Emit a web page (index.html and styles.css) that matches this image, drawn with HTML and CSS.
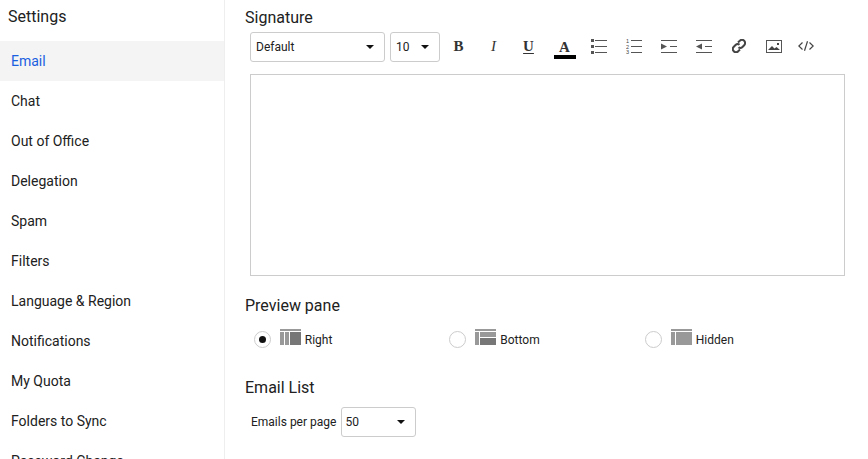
FILE: index.html
```html
<!DOCTYPE html>
<html lang="en">
<head>
<meta charset="utf-8">
<title>Settings</title>
<link rel="stylesheet" href="styles.css">
</head>
<body>
<div class="app">
  <nav class="sidebar">
    <h1 class="sidebar-title">Settings</h1>
    <ul class="nav-list">
      <li class="nav-item active">Email</li>
      <li class="nav-item">Chat</li>
      <li class="nav-item">Out of Office</li>
      <li class="nav-item">Delegation</li>
      <li class="nav-item">Spam</li>
      <li class="nav-item">Filters</li>
      <li class="nav-item">Language &amp; Region</li>
      <li class="nav-item">Notifications</li>
      <li class="nav-item">My Quota</li>
      <li class="nav-item">Folders to Sync</li>
      <li class="nav-item">Password Change</li>
    </ul>
  </nav>
  <main class="content">
    <h2 class="heading heading-signature">Signature</h2>
    <div class="toolbar">
      <div class="select select-font"><span>Default</span><i class="caret"></i></div>
      <div class="select select-size"><span>10</span><i class="caret"></i></div>
      <div class="tools">
        <span class="tool glyph bold">B</span>
        <span class="tool glyph italic">I</span>
        <span class="tool glyph underline">U</span>
        <span class="tool color"><span class="glyph bold">A</span><i class="color-bar"></i></span>
        <span class="tool"><svg width="16" height="16" viewBox="0 0 16 16"><g fill="#555"><rect x="0" y="1" width="3" height="3"/><rect x="0" y="7" width="3" height="3"/><rect x="0" y="13" width="3" height="3"/><rect x="4" y="2" width="12" height="1"/><rect x="4" y="8" width="12" height="1"/><rect x="4" y="14" width="12" height="1"/></g></svg></span>
        <span class="tool"><svg width="16" height="16" viewBox="0 0 16 16"><g fill="#555"><rect x="5" y="2" width="11" height="1"/><rect x="5" y="8" width="11" height="1"/><rect x="5" y="14" width="11" height="1"/></g><g class="digits"><text x="0" y="4.500">1</text><text x="0" y="10.500">2</text><text x="0" y="16">3</text></g></svg></span>
        <span class="tool"><svg width="16" height="14" viewBox="0 0 16 14"><g fill="#555"><rect x="0" y="1" width="16" height="1"/><rect x="0" y="13" width="16" height="1"/><rect x="9" y="7" width="7" height="1"/><path d="M0 4.500L6 7.500L0 10.500Z"/></g></svg></span>
        <span class="tool"><svg width="16" height="14" viewBox="0 0 16 14"><g fill="#555"><rect x="0" y="1" width="16" height="1"/><rect x="0" y="13" width="16" height="1"/><rect x="9" y="7" width="7" height="1"/><path d="M6 4.500L0 7.500L6 10.500Z"/></g></svg></span>
        <span class="tool"><svg width="14" height="14" viewBox="0 0 14 14" fill="none" stroke="#444" stroke-width="2"><path d="M6 3.500L7.800 1.800A2.600 2.600 0 0 1 12.200 6.200L10.200 8.200A2.600 2.600 0 0 1 6.500 8.200"/><path d="M8 10.500L6.200 12.200A2.600 2.600 0 0 1 1.800 7.800L3.800 5.800A2.600 2.600 0 0 1 7.500 5.800"/></svg></span>
        <span class="tool"><svg width="16" height="13" viewBox="0 0 16 13"><rect x="0.500" y="0.500" width="15" height="12" fill="#fff" stroke="#555"/><path d="M2 10L6 6L8.500 8.500L10.500 7L14 10Z" fill="#444"/><rect x="11" y="3" width="2" height="2" fill="#444"/></svg></span>
        <span class="tool tool-code"><svg width="16" height="10" viewBox="0 0 16 10" fill="none" stroke="#444" stroke-width="1.200"><path d="M4.500 1.500L0.800 5L4.500 8.500"/><path d="M11.500 1.500L15.200 5L11.500 8.500"/><path d="M9.500 0.300L6.500 9.700"/></svg></span>
      </div>
    </div>
    <div class="editor"></div>
    <h2 class="heading heading-preview">Preview pane</h2>
    <div class="radio-row">
      <label class="radio-option">
        <i class="radio checked"></i>
        <svg class="pane-icon" width="21" height="16" viewBox="0 0 21 16"><rect width="21" height="2" fill="#999"/><rect y="3" width="4" height="13" fill="#999"/><rect x="5" y="3" width="4" height="13" fill="#999"/><rect x="10" y="3" width="11" height="13" fill="#777"/></svg>
        <span>Right</span>
      </label>
      <label class="radio-option">
        <i class="radio"></i>
        <svg class="pane-icon" width="21" height="16" viewBox="0 0 21 16"><rect width="21" height="2" fill="#999"/><rect y="3" width="4" height="13" fill="#999"/><rect x="5" y="3" width="16" height="5" fill="#999"/><rect x="5" y="9" width="16" height="7" fill="#777"/></svg>
        <span>Bottom</span>
      </label>
      <label class="radio-option">
        <i class="radio"></i>
        <svg class="pane-icon" width="21" height="16" viewBox="0 0 21 16"><rect width="21" height="2" fill="#999"/><rect y="3" width="4" height="13" fill="#999"/><rect x="5" y="3" width="16" height="13" fill="#999"/></svg>
        <span>Hidden</span>
      </label>
    </div>
    <h2 class="heading heading-list">Email List</h2>
    <div class="per-page">
      <span>Emails per page</span>
      <div class="select select-page"><span>50</span><i class="caret"></i></div>
    </div>
  </main>
</div>
</body>
</html>
```
FILE: styles.css
```css
* { box-sizing: border-box; }
html, body { margin: 0; height: 100%; overflow: hidden; background: #fff; }
body { font-family: Roboto, "Liberation Sans", sans-serif; color: #212121; font-size: 14px; }
.app { display: flex; height: 459px; overflow: hidden; }
.sidebar { width: 225px; flex: none; border-right: 1px solid #eee; overflow: hidden; }
.sidebar-title { margin: 0; padding: 7px 0 0 8px; height: 41px; font-size: 16px; font-weight: 400; line-height: 19px; }
.nav-list { list-style: none; margin: 0; padding: 0; }
.nav-item { height: 40px; line-height: 40px; padding-left: 11px; font-size: 14px; white-space: nowrap; }
.nav-item.active { background: #f4f4f4; color: #1a5fe0; }
.content { flex: 1; padding: 8px 23px 0 20px; min-width: 0; }
.heading { margin: 0; font-size: 16px; font-weight: 400; line-height: 19px; }
.toolbar { display: flex; align-items: center; height: 30px; margin-top: 5px; padding-left: 5px; }
.select { display: flex; align-items: center; justify-content: space-between; height: 30px; border: 1px solid #ccc; border-radius: 3px; font-size: 12px; background: #fff; }
.caret { width: 0; height: 0; border-left: 4px solid transparent; border-right: 4px solid transparent; border-top: 4px solid #111; }
.select-font { width: 135px; padding: 0 10px 0 5px; }
.select-size { width: 50px; margin-left: 5px; padding: 0 10px 0 5px; }
.tools { display: flex; align-items: center; margin-left: 1px; }
.tool { width: 35px; height: 30px; padding-bottom: 2px; display: flex; align-items: center; justify-content: center; color: #444; }
.glyph { font-family: "Liberation Serif", serif; font-size: 15px; line-height: 16px; color: #333; }
.bold { font-weight: 700; }
.italic { font-style: italic; }
.underline { font-weight: 700; text-decoration: underline; text-underline-offset: 2px; }
.color { flex-direction: column; padding: 0 0 0 2px; }
.color .glyph { margin-top: 3px; }
.color-bar { display: block; width: 22px; height: 4px; background: #000; margin-top: 0; }
.tool-code { padding-right: 5px; }
.digits { font-family: "Liberation Sans", sans-serif; font-size: 5.500px; fill: #444; }
.editor { height: 202px; margin: 12px 0 0 5px; border: 1px solid #ccc; }
.heading-preview { margin-top: 20px; }
.radio-row { display: flex; margin-top: 14px; padding-left: 8.750px; height: 16px; }
.radio-option { width: 195.500px; display: flex; align-items: flex-start; font-size: 12px; }
.radio { width: 17px; height: 17px; margin-top: 2px; border: 1px solid #ccc; border-radius: 50%; display: flex; align-items: center; justify-content: center; }
.radio.checked::after { content: ""; width: 7px; height: 7px; border-radius: 50%; background: #111; }
.pane-icon { margin-left: 9px; }
.radio-option span { margin: 4px 0 0 4px; line-height: 15px; }
.heading-list { margin-top: 33px; }
.per-page { display: flex; align-items: center; height: 30px; margin-top: 10px; padding-left: 6px; font-size: 12px; }
.select-page { width: 75px; margin-left: 5px; padding: 0 10px 0 3px; }
```
